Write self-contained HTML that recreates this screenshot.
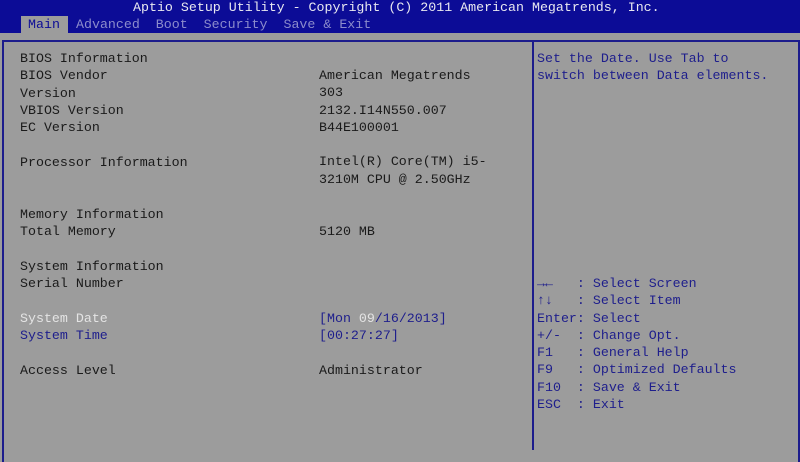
<!DOCTYPE html>
<html><head><meta charset="utf-8"><style>
*{margin:0;padding:0}
body{width:800px;height:450px;background:#9c9c9c;position:relative;overflow:hidden;font-family:"Liberation Mono","DejaVu Sans Mono",monospace;font-size:13.3px;color:#1a1a1a}
.hdr{position:absolute;left:0;top:0;width:800px;height:33px;background:#0c0c96}
.t{position:absolute;white-space:pre;line-height:17.3px}
.title{color:#e8e8f0;left:133px;top:-1px}
.tab{color:#8c8ccc;top:16px}
.main{position:absolute;left:21px;top:16px;width:47px;height:17px;background:#9c9c9c}
.frame{position:absolute;left:2px;top:40px;width:794px;height:420px;border:2px solid #1c1c8c;border-bottom:none}
.vl{position:absolute;left:532px;top:40px;width:2px;height:410px;background:#1c1c8c}
.b{color:#1e1e8c}
.w{color:#e4e4e4}
</style></head><body>
<div class="hdr"></div>
<div class="main"></div>
<div class="t title">Aptio Setup Utility - Copyright (C) 2011 American Megatrends, Inc.</div>
<div class="t tab" style="left:28px;color:#0c0c96">Main</div>
<div class="t tab" style="left:76px">Advanced  Boot  Security  Save &amp; Exit</div>
<div class="frame"></div>
<div class="vl"></div>
<div class="t" style="left:20px;top:50px">BIOS Information
BIOS Vendor
Version
VBIOS Version
EC Version

Processor Information


Memory Information
Total Memory

System Information
Serial Number</div>
<div class="t w" style="left:20px;top:310px">System Date</div>
<div class="t b" style="left:20px;top:327px">System Time</div>
<div class="t" style="left:20px;top:362px">Access Level</div>
<div class="t" style="left:319px;top:67px">American Megatrends
303
2132.I14N550.007
B44E100001

Intel(R) Core(TM) i5-
3210M CPU @ 2.50GHz


5120 MB</div>
<div class="t b" style="left:319px;top:310px">[Mon <span class="w">09</span>/16/2013]
[00:27:27]</div>
<div class="t" style="left:319px;top:362px">Administrator</div>
<div class="t b" style="left:537px;top:50px">Set the Date. Use Tab to
switch between Data elements.</div>
<div class="t b" style="left:537px;top:275px">→←   : Select Screen
↑↓   : Select Item
Enter: Select
+/-  : Change Opt.
F1   : General Help
F9   : Optimized Defaults
F10  : Save &amp; Exit
ESC  : Exit</div>
</body></html>
